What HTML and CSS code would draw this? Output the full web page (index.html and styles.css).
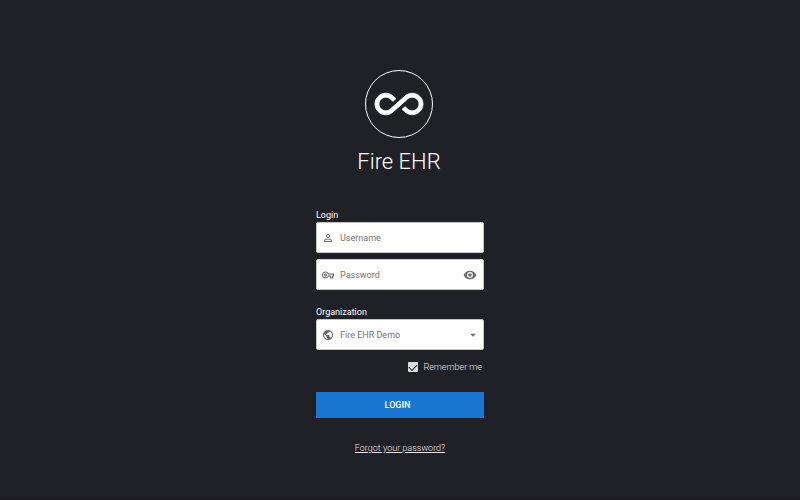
FILE: index.html
```html
<!DOCTYPE html>
<html lang="en">
<head>
<meta charset="utf-8">
<meta name="viewport" content="width=device-width, initial-scale=1">
<title>Fire EHR</title>
<link rel="stylesheet" href="styles.css">
</head>
<body>
<main class="login">
  <header class="brand">
    <div class="logo">
      <svg viewBox="0 0 24 24" aria-hidden="true"><path d="M18.6 6.62c-1.44 0-2.8.56-3.77 1.53L12 10.66 10.48 12h.01L7.8 14.39c-.64.64-1.49.99-2.4.99-1.87 0-3.39-1.51-3.39-3.38S3.53 8.62 5.4 8.62c.91 0 1.76.35 2.44 1.03l1.13 1 1.51-1.34L9.22 8.2C8.2 7.18 6.84 6.62 5.4 6.62 2.42 6.62 0 9.04 0 12s2.42 5.38 5.4 5.38c1.44 0 2.8-.56 3.77-1.53l2.83-2.5.01.01L13.52 12h-.01l2.69-2.39c.64-.64 1.49-.99 2.4-.99 1.87 0 3.39 1.51 3.39 3.38s-1.52 3.38-3.39 3.38c-.9 0-1.76-.35-2.44-1.03l-1.14-1.01-1.51 1.34 1.27 1.12c1.02 1.01 2.37 1.57 3.82 1.57 2.98 0 5.4-2.41 5.4-5.38s-2.42-5.38-5.4-5.38z"/></svg>
    </div>
    <h1 class="title">Fire EHR</h1>
  </header>
  <form class="form">
    <label class="label" for="username">Login</label>
    <div class="field">
      <svg class="icon" viewBox="0 0 24 24" aria-hidden="true"><path d="M12 5.900a2.100 2.100 0 1 1 0 4.200 2.100 2.100 0 0 1 0-4.200m0 9c2.970 0 6.100 1.460 6.100 2.100v1.100H5.900V17c0-.64 3.130-2.100 6.100-2.100M12 4C9.790 4 8 5.790 8 8s1.790 4 4 4 4-1.790 4-4-1.790-4-4-4zm0 9c-2.670 0-8 1.340-8 4v3h16v-3c0-2.660-5.330-4-8-4z"/></svg>
      <input class="control" id="username" type="text" placeholder="Username">
    </div>
    <div class="field field-password">
      <svg class="icon" viewBox="0 0 24 24" aria-hidden="true"><path d="M22 19h-6v-4h-2.680c-1.140 2.420-3.600 4-6.320 4-3.860 0-7-3.140-7-7s3.140-7 7-7c2.720 0 5.170 1.580 6.320 4H24v6h-2v4zm-4-2h2v-4h2v-2H11.940l-.23-.67C11.010 8.340 9.110 7 7 7c-2.760 0-5 2.240-5 5s2.240 5 5 5c2.110 0 4.010-1.340 4.710-3.330l.23-.67H18v4zM7 15c-1.650 0-3-1.350-3-3s1.350-3 3-3 3 1.350 3 3-1.350 3-3 3zm0-4c-.55 0-1 .45-1 1s.45 1 1 1 1-.45 1-1-.45-1-1-1z"/></svg>
      <input class="control" id="password" type="password" placeholder="Password" aria-label="Password">
      <button class="reveal" type="button" aria-label="Show password">
        <svg viewBox="0 0 24 24" aria-hidden="true"><path d="M12 4.500C7 4.500 2.730 7.610 1 12c1.730 4.390 6 7.500 11 7.500s9.270-3.110 11-7.500c-1.730-4.390-6-7.500-11-7.500zM12 17c-2.760 0-5-2.240-5-5s2.240-5 5-5 5 2.240 5 5-2.240 5-5 5zm0-8c-1.660 0-3 1.340-3 3s1.340 3 3 3 3-1.340 3-3-1.340-3-3-3z"/></svg>
      </button>
    </div>
    <label class="label label-organization" for="organization">Organization</label>
    <div class="field">
      <svg class="icon" viewBox="0 0 24 24" aria-hidden="true"><path d="M12 2C6.480 2 2 6.480 2 12s4.480 10 10 10 10-4.480 10-10S17.520 2 12 2zm-1 17.930c-3.950-.49-7-3.850-7-7.930 0-.62.08-1.210.21-1.790L9 15v1c0 1.100.9 2 2 2v1.930zm6.900-2.540c-.26-.81-1-1.390-1.900-1.390h-1v-3c0-.55-.45-1-1-1H8v-2h2c.55 0 1-.45 1-1V7h2c1.100 0 2-.9 2-2v-.41c2.930 1.190 5 4.060 5 7.410 0 2.080-.8 3.970-2.100 5.390z"/></svg>
      <select class="control" id="organization"><option>Fire EHR Demo</option></select>
      <svg class="arrow" viewBox="0 0 24 24" aria-hidden="true"><path d="M7 10l5 5 5-5z"/></svg>
    </div>
    <label class="remember">
      <input class="check" type="checkbox" checked>
      Remember me
    </label>
    <button class="submit" type="submit">LOGIN</button>
  </form>
  <a class="forgot" href="#">Forgot your password?</a>
</main>
</body>
</html>
```
FILE: styles.css
```css
* {
  box-sizing: border-box;
}

body {
  margin: 0;
  background: #202126;
  color: #fff;
  font: 9px/12px Roboto, sans-serif;
}

.login {
  display: flex;
  flex-direction: column;
  align-items: center;
  min-height: 100vh;
  padding: 70px 16px 40px;
  border-bottom: 2px solid #1e1a21;
}

.brand {
  display: flex;
  flex-direction: column;
  align-items: center;
  padding-right: 2px;
}

.logo {
  display: grid;
  place-items: center;
  width: 68px;
  height: 68px;
  border: 1px solid #fff;
  border-radius: 50%;
}

.logo svg {
  width: 48px;
  height: 48px;
  overflow: visible;
  fill: #fff;
  stroke: #fff;
  stroke-width: 0.4;
}

.title {
  margin: 9px 0 0;
  font-size: 22px;
  line-height: 30px;
  font-weight: 300;
}

.form {
  display: flex;
  flex-direction: column;
  width: 100%;
  max-width: 168px;
  margin-top: 32px;
}

.label {
  padding-bottom: 1px;
}

.label-organization {
  margin-top: 16px;
}

.field {
  display: flex;
  align-items: center;
  height: 31px;
  padding: 0 5px;
  border: 1px solid #c4c4c4;
  border-radius: 2px;
  background: #fff;
  color: #757575;
}

.field-password {
  margin-top: 6px;
}

.icon {
  flex: none;
  width: 12px;
  height: 12px;
  fill: #666;
}

.control {
  flex: 1;
  min-width: 0;
  height: 100%;
  margin: 0;
  padding: 0 0 0 6px;
  border: 0;
  outline: 0;
  appearance: none;
  background: transparent;
  color: #757575;
  font: inherit;
}

.control::placeholder {
  color: #757575;
}

.reveal {
  flex: none;
  width: 14px;
  height: 14px;
  margin-right: 1px;
  padding: 0;
  border: 0;
  background: transparent;
}

.reveal svg {
  display: block;
  width: 14px;
  height: 14px;
  fill: #6e6e6e;
}

.arrow {
  flex: none;
  width: 14px;
  height: 14px;
  margin-right: -2px;
  fill: #6e6e6e;
}

.remember {
  display: flex;
  align-items: center;
  align-self: flex-end;
  gap: 6px;
  margin-top: 11px;
  padding-right: 2px;
  color: #e4e4e6;
  font-weight: 300;
}

.check {
  display: grid;
  place-items: center;
  width: 10px;
  height: 10px;
  margin: 0;
  appearance: none;
  border-radius: 1px;
  background: #dedee0;
}

.check:checked::before {
  content: "";
  width: 7px;
  height: 4px;
  margin-bottom: 2px;
  border: solid #202126;
  border-width: 0 0 1px 1px;
  transform: rotate(-45deg);
}

.submit {
  height: 26px;
  margin-top: 19px;
  padding: 0 5px 0 0;
  border: 0;
  background: #1976d2;
  color: #fff;
  font: inherit;
  font-weight: 500;
}

.forgot {
  margin-top: 24px;
  color: #e4e4e6;
  font-weight: 300;
}
```
